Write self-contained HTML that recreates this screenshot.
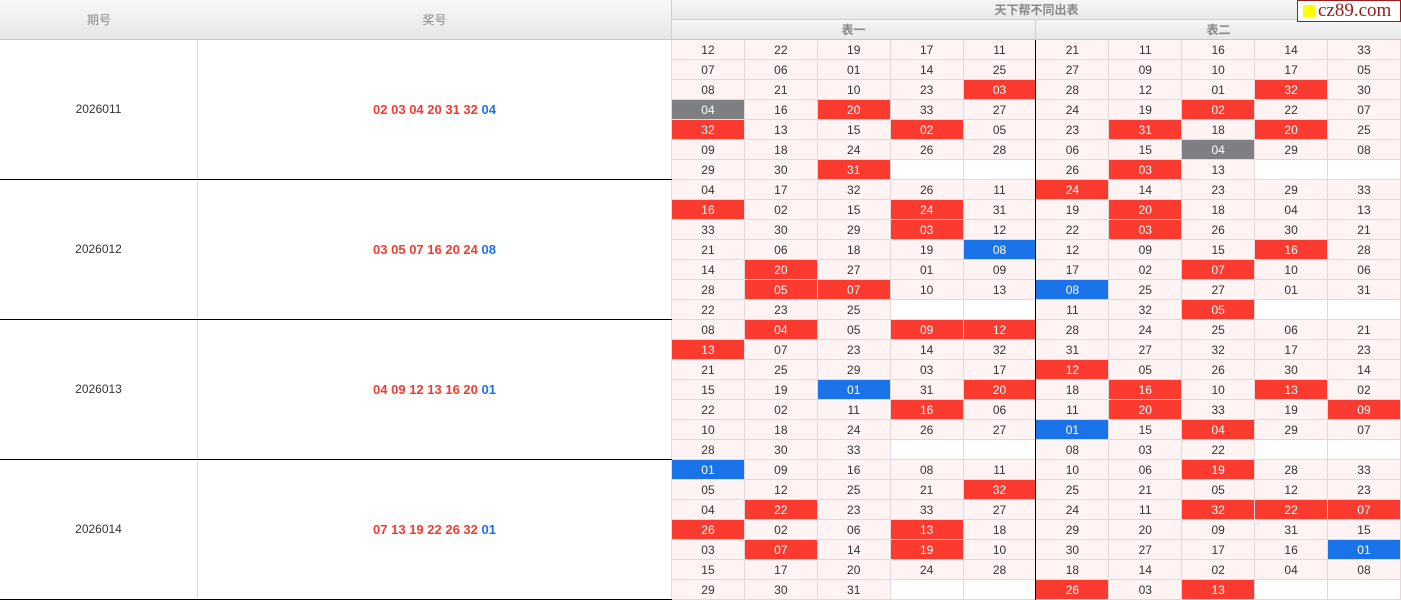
<!DOCTYPE html>
<html><head><meta charset="utf-8"><style>
*{margin:0;padding:0;box-sizing:border-box}
body{width:1401px;height:600px;overflow:hidden;background:#fff;font-family:"Liberation Sans","Noto Sans CJK SC",sans-serif;font-size:12px;color:#333;position:relative}
.hd{position:absolute;top:0;height:40px;background:linear-gradient(#f8f8f8,#e6e6e6);color:#888;text-align:center;border-right:1px solid #d0d0d0;border-bottom:1px solid #c8c8c8}
.hs{position:absolute;height:20px;line-height:20px;background:linear-gradient(#f6f6f6,#e8e8e8);color:#888;text-align:center;font-size:12px;font-weight:bold}
.g{position:absolute;left:0;width:1401px;height:140px;border-bottom:1px solid #000}
.p{position:absolute;left:0;top:0;width:198px;height:139px;line-height:139px;text-align:center;border-right:1px solid #ddd;color:#333}
.n{position:absolute;left:198px;top:0;width:474px;height:139px;line-height:139px;text-align:center;border-right:1px solid #ddd;font-weight:bold;color:#f33b30;font-size:13px}
.n b{color:#1a73e8}
.c{position:absolute;left:672px;top:0;width:729px;display:flex;flex-wrap:wrap}
.c i{font-style:normal;display:block;width:72.9px;height:20px;line-height:20px;text-align:center;background:#fff4f3;border-right:1px solid #e6d6d6;border-bottom:1px solid #e6d6d6;color:#333}
.c i.r{background:#fb3b2f;color:#fff}
.c i.b{background:#1a73e8;color:#fff}
.c i.k{background:#7d7f82;color:#fff}
.c i.e{background:#fff}
.vl{position:absolute;left:1035px;top:40px;width:1px;height:560px;background:#000}
.logo{position:absolute;left:1297px;top:0;width:104px;height:22px;background:#fff;border:1px solid #9b1a1a;font-family:"Liberation Serif",serif;font-size:19px;color:#9b1a1a;line-height:20px;padding-left:20px}
.logo span{position:absolute;left:5px;top:4px;width:12px;height:12px;background:#ffff00}
</style></head><body>
<div class="hd" style="left:0;width:199px;line-height:40px">期号</div>
<div class="hd" style="left:198px;width:474px;line-height:40px">奖号</div>
<div class="hs" style="left:672px;top:0;width:729px;border-bottom:1px solid #d0d0d0">天下帮不同出表</div>
<div class="hs" style="left:672px;top:20px;width:364px;border-right:1px solid #d0d0d0;border-bottom:1px solid #c8c8c8">表一</div>
<div class="hs" style="left:1036px;top:20px;width:365px;border-bottom:1px solid #c8c8c8">表二</div>
<div class="logo"><span></span>cz89.com</div>

<div class="g" style="top:40px"><div class="p">2026011</div><div class="n">02 03 04 20 31 32 <b>04</b></div><div class="c">
<i>12</i><i>22</i><i>19</i><i>17</i><i>11</i><i>21</i><i>11</i><i>16</i><i>14</i><i>33</i>
<i>07</i><i>06</i><i>01</i><i>14</i><i>25</i><i>27</i><i>09</i><i>10</i><i>17</i><i>05</i>
<i>08</i><i>21</i><i>10</i><i>23</i><i class="r">03</i><i>28</i><i>12</i><i>01</i><i class="r">32</i><i>30</i>
<i class="k">04</i><i>16</i><i class="r">20</i><i>33</i><i>27</i><i>24</i><i>19</i><i class="r">02</i><i>22</i><i>07</i>
<i class="r">32</i><i>13</i><i>15</i><i class="r">02</i><i>05</i><i>23</i><i class="r">31</i><i>18</i><i class="r">20</i><i>25</i>
<i>09</i><i>18</i><i>24</i><i>26</i><i>28</i><i>06</i><i>15</i><i class="k">04</i><i>29</i><i>08</i>
<i>29</i><i>30</i><i class="r">31</i><i class="e"></i><i class="e"></i><i>26</i><i class="r">03</i><i>13</i><i class="e"></i><i class="e"></i>
</div></div>

<div class="g" style="top:180px"><div class="p">2026012</div><div class="n">03 05 07 16 20 24 <b>08</b></div><div class="c">
<i>04</i><i>17</i><i>32</i><i>26</i><i>11</i><i class="r">24</i><i>14</i><i>23</i><i>29</i><i>33</i>
<i class="r">16</i><i>02</i><i>15</i><i class="r">24</i><i>31</i><i>19</i><i class="r">20</i><i>18</i><i>04</i><i>13</i>
<i>33</i><i>30</i><i>29</i><i class="r">03</i><i>12</i><i>22</i><i class="r">03</i><i>26</i><i>30</i><i>21</i>
<i>21</i><i>06</i><i>18</i><i>19</i><i class="b">08</i><i>12</i><i>09</i><i>15</i><i class="r">16</i><i>28</i>
<i>14</i><i class="r">20</i><i>27</i><i>01</i><i>09</i><i>17</i><i>02</i><i class="r">07</i><i>10</i><i>06</i>
<i>28</i><i class="r">05</i><i class="r">07</i><i>10</i><i>13</i><i class="b">08</i><i>25</i><i>27</i><i>01</i><i>31</i>
<i>22</i><i>23</i><i>25</i><i class="e"></i><i class="e"></i><i>11</i><i>32</i><i class="r">05</i><i class="e"></i><i class="e"></i>
</div></div>

<div class="g" style="top:320px"><div class="p">2026013</div><div class="n">04 09 12 13 16 20 <b>01</b></div><div class="c">
<i>08</i><i class="r">04</i><i>05</i><i class="r">09</i><i class="r">12</i><i>28</i><i>24</i><i>25</i><i>06</i><i>21</i>
<i class="r">13</i><i>07</i><i>23</i><i>14</i><i>32</i><i>31</i><i>27</i><i>32</i><i>17</i><i>23</i>
<i>21</i><i>25</i><i>29</i><i>03</i><i>17</i><i class="r">12</i><i>05</i><i>26</i><i>30</i><i>14</i>
<i>15</i><i>19</i><i class="b">01</i><i>31</i><i class="r">20</i><i>18</i><i class="r">16</i><i>10</i><i class="r">13</i><i>02</i>
<i>22</i><i>02</i><i>11</i><i class="r">16</i><i>06</i><i>11</i><i class="r">20</i><i>33</i><i>19</i><i class="r">09</i>
<i>10</i><i>18</i><i>24</i><i>26</i><i>27</i><i class="b">01</i><i>15</i><i class="r">04</i><i>29</i><i>07</i>
<i>28</i><i>30</i><i>33</i><i class="e"></i><i class="e"></i><i>08</i><i>03</i><i>22</i><i class="e"></i><i class="e"></i>
</div></div>

<div class="g" style="top:460px"><div class="p">2026014</div><div class="n">07 13 19 22 26 32 <b>01</b></div><div class="c">
<i class="b">01</i><i>09</i><i>16</i><i>08</i><i>11</i><i>10</i><i>06</i><i class="r">19</i><i>28</i><i>33</i>
<i>05</i><i>12</i><i>25</i><i>21</i><i class="r">32</i><i>25</i><i>21</i><i>05</i><i>12</i><i>23</i>
<i>04</i><i class="r">22</i><i>23</i><i>33</i><i>27</i><i>24</i><i>11</i><i class="r">32</i><i class="r">22</i><i class="r">07</i>
<i class="r">26</i><i>02</i><i>06</i><i class="r">13</i><i>18</i><i>29</i><i>20</i><i>09</i><i>31</i><i>15</i>
<i>03</i><i class="r">07</i><i>14</i><i class="r">19</i><i>10</i><i>30</i><i>27</i><i>17</i><i>16</i><i class="b">01</i>
<i>15</i><i>17</i><i>20</i><i>24</i><i>28</i><i>18</i><i>14</i><i>02</i><i>04</i><i>08</i>
<i>29</i><i>30</i><i>31</i><i class="e"></i><i class="e"></i><i class="r">26</i><i>03</i><i class="r">13</i><i class="e"></i><i class="e"></i>
</div></div>
<div class="vl"></div>
</body></html>
